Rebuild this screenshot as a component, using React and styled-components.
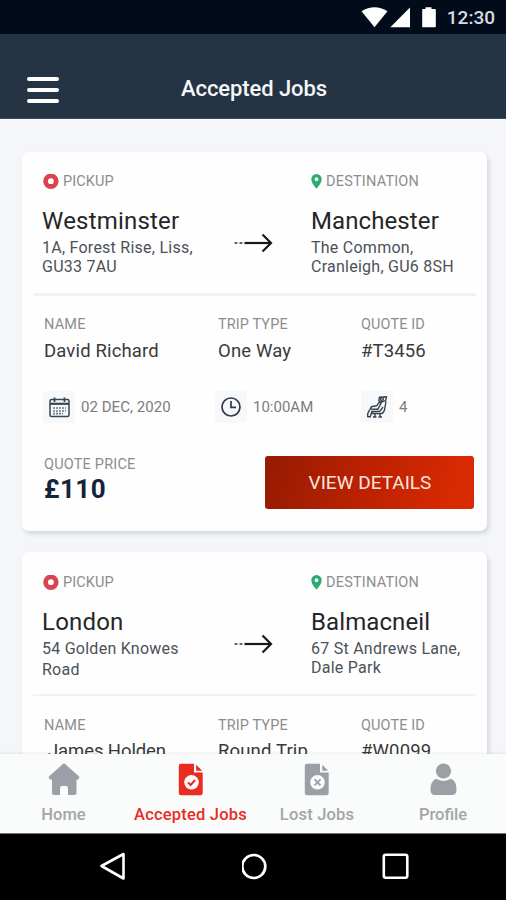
import React from "react";
import styled, { createGlobalStyle } from "styled-components";

const GlobalStyle = createGlobalStyle`
  * { box-sizing: border-box; }
  body { margin: 0; font-family: Roboto, "Liberation Sans", sans-serif; }
  svg { display: block; flex: none; }
`;

const Screen = styled.div`
  display: flex;
  flex-direction: column;
  width: 506px;
  height: 900px;
  overflow: hidden;
  background: #f4f6f9;
`;

const StatusBar = styled.div`
  flex: none;
  display: flex;
  justify-content: flex-end;
  height: 34px;
  padding-right: 11px;
  background: #020b1a;
`;

const Clock = styled.span`
  margin-left: 10px;
  font-size: 19px;
  font-weight: 500;
  line-height: 36px;
  color: #d9dde2;
`;

const Header = styled.header`
  flex: none;
  display: grid;
  grid-template-columns: 60px 1fr 60px;
  height: 85px;
  padding: 0 0 0 27px;
  background: #253445;
  border-bottom: 1px solid #415061;
`;

const MenuButton = styled.button`
  display: flex;
  flex-direction: column;
  gap: 7px;
  width: 32px;
  padding: 43px 0 0;
  border: 0;
  background: none;
`;

const MenuLine = styled.span`
  height: 4px;
  border-radius: 2px;
  background: #fff;
`;

const Title = styled.h1`
  margin: 37px 0 0 -25px;
  text-align: center;
  font-size: 22px;
  font-weight: 500;
  line-height: 36px;
  letter-spacing: -0.1px;
  color: #f4f6f8;
`;

const Content = styled.main`
  flex: 1;
  min-height: 0;
  display: flex;
  flex-direction: column;
  gap: 21px;
  padding: 33px 19px 0 22px;
  overflow: hidden;
`;

const Card = styled.article`
  flex: none;
  height: 379px;
  border-radius: 7px;
  background: #fefefe;
  box-shadow: 2px 3px 4px rgba(60, 70, 85, 0.17);
`;

const Route = styled.section`
  display: grid;
  grid-template-columns: 190px 79px 1fr;
  height: ${(p) => 141 + p.$shift}px;
  padding: ${(p) => 20 + p.$shift}px 0 0 20px;
`;

const Place = styled.div`
  display: flex;
  flex-direction: column;
  align-items: flex-start;
  white-space: nowrap;
`;

const Tag = styled.div`
  display: flex;
  align-items: center;
  gap: 4px;
  height: 20px;
  padding-left: ${(p) => p.$inset || 0}px;
`;

const Label = styled.span`
  display: block;
  font-size: 14.5px;
  line-height: 20px;
  letter-spacing: ${(p) => p.$spacing || 0}px;
  white-space: nowrap;
  color: #8d8d8d;
`;

const City = styled.h2`
  margin: 14px 0 0;
  font-size: 24px;
  font-weight: 400;
  line-height: 30px;
  letter-spacing: ${(p) => p.$spacing}px;
  color: #262626;
`;

const Address = styled.p`
  margin: ${(p) => (p.$leading > 19 ? 1 : 2)}px 0 0;
  font-size: 16px;
  line-height: ${(p) => p.$leading}px;
  letter-spacing: 0.25px;
  color: #4c5158;
`;

const ArrowCell = styled.div`
  padding: 61px 0 0 2px;
`;

const Divider = styled.hr`
  height: 3px;
  margin: 0 11px;
  border: 0;
  border-bottom: ${(p) => 3 - p.$thickness}px solid #fefefe;
  background: #f1f2f3;
`;

const Details = styled.section`
  display: grid;
  grid-template-columns: 174px 143px 1fr;
  padding: 19px 0 0 22px;
`;

const Value = styled.span`
  display: block;
  margin-top: ${(p) => 4 - (p.$raise || 0)}px;
  padding-left: ${(p) => p.$indent || 0}px;
  font-size: 18.5px;
  line-height: 24px;
  letter-spacing: ${(p) => (p.$indent ? -0.1 : 0.15)}px;
  white-space: nowrap;
  color: #3a3a3a;
`;

const Facts = styled.section`
  display: grid;
  grid-template-columns: 172px 146px 1fr;
  padding: 28px 0 0 21px;
`;

const Fact = styled.div`
  display: flex;
  align-items: center;
  gap: 6px;
  font-size: 15px;
  letter-spacing: ${(p) => p.$spacing || 0}px;
  white-space: nowrap;
  color: #7c7c7c;
`;

const IconTile = styled.span`
  display: grid;
  place-items: center;
  width: 32px;
  height: 32px;
  border-radius: 2px;
  background: #f6f8fa;
`;

const Footer = styled.section`
  display: flex;
  justify-content: space-between;
  padding: 32px 13px 0 22px;
`;

const Price = styled.strong`
  display: block;
  margin-top: -1px;
  font-size: 26px;
  font-weight: 700;
  line-height: 30px;
  letter-spacing: 0.5px;
  color: #14243a;
`;

const DetailsButton = styled.button`
  width: 209px;
  height: 53px;
  margin-top: 1px;
  padding: 0 0 0 1px;
  border: 0;
  border-radius: 3px;
  background: linear-gradient(105deg, #961b02 2%, #b92102 45%, #da2a02 92%);
  font: 400 19px/54px Roboto, "Liberation Sans", sans-serif;
  color: #fbe4df;
`;

const TabBar = styled.nav`
  flex: none;
  position: relative;
  display: grid;
  grid-template-columns: 127px 127px 126px 126px;
  height: 79px;
  background: #fafbfb;
  box-shadow: 0 -1px 3px rgba(0, 0, 0, 0.08);
`;

const Tab = styled.a`
  display: flex;
  flex-direction: column;
  align-items: center;
  padding-top: 9px;
  font-size: 16.5px;
  font-weight: 500;
  line-height: 24px;
  letter-spacing: ${(p) => p.$spacing || 0}px;
  white-space: nowrap;
  color: ${(p) => (p.$active ? "#ea2b1f" : "#a2a5a9")};
  svg { margin-bottom: 7px; color: ${(p) => (p.$active ? "#ea2b1f" : "#9aa0a6")}; }
`;

const SystemBar = styled.div`
  flex: none;
  display: flex;
  gap: 114px;
  height: 67px;
  padding: 18px 0 0 98px;
  background: #000;
  border-top: 1px solid #77797b;
`;

const StatusIcons = () => (
  <svg width="76" height="34" viewBox="361 0 76 34" fill="#fff">
    <path d="M361.5 11.2Q374.5 3.5 387.5 11.2L374.5 27.3Z" />
    <path d="M410 7.5V27.3H390.3Z" />
    <path d="M423 9h2.5V7.3h6V9h3.5q.8 0 .8.8V26.500q0 .8-.8.8H423q-.8 0-.8-.8V9.800q0-.8.8-.8Z" />
  </svg>
);

const PickupIcon = () => (
  <svg width="16" height="16" viewBox="0 0 16 16">
    <circle cx="7.900" cy="7.200" r="5.3" fill="#fff" stroke="#d64550" strokeWidth="4.800" />
  </svg>
);

const PinIcon = () => (
  <svg width="11" height="16" viewBox="0 0 11 16">
    <path transform="translate(0 -.7)" fillRule="evenodd" fill="#2cac73" d="M5.500.7a5.200 5.200 0 0 0-5.200 5.200C.3 9.800 5.500 15.400 5.500 15.400s5.200-5.600 5.200-9.500A5.200 5.200 0 0 0 5.500.7Zm0 3.300a1.900 1.900 0 1 1 0 3.800 1.900 1.900 0 0 1 0-3.800Z" />
  </svg>
);

const ArrowIcon = () => (
  <svg width="39" height="20" viewBox="0 0 39 20" fill="none" stroke="#171717" strokeWidth="2.200">
    <path d="M0.500 10h3M5.500 10h3" stroke="#666" />
    <path d="M10.500 10h26" />
    <path d="M28.500 1.500 37 10l-8.500 8.500" />
  </svg>
);

const CalendarIcon = () => (
  <svg width="21" height="21" viewBox="0 0 21 21" fill="none" stroke="#3b4653">
    <rect x="1" y="2.500" width="19" height="17" rx="1.500" strokeWidth="1.500" />
    <path d="M1 6.800h19" strokeWidth="2.200" />
    <path d="M5.500.5v4.500M15.500.5v4.500" strokeWidth="1.800" />
    <path d="M4 11h13M4 14h13M4 16.700h10" stroke="#707a88" strokeWidth="1.700" strokeDasharray="2 1" />
  </svg>
);

const ClockIcon = () => (
  <svg width="20" height="20" viewBox="0 0 20 20" fill="none" stroke="#303a46" strokeWidth="1.700">
    <circle cx="10" cy="10" r="9" />
    <path d="M10 4v6.300h5" />
  </svg>
);

const PassengerIcon = () => (
  <svg width="21" height="22" viewBox="0 0 21 22" fill="none" stroke="#35404d" strokeWidth="1.400" strokeLinejoin="round">
    <path d="m12.500 1.200 7-.4-1 4-3 .8-3.700-.7Z" />
    <circle cx="15" cy="3" r="1.400" />
    <path d="m12.300 6.200-2.500 3.500-5.500 1-1 2.300 7.500.3 3.700-6.800Z" />
    <path d="m19 5.500-1.600 9-2.200 3H5.500l-1-2 8.500-.3 3-4.200M2.700 13.500l-2 4.300v3h2.600l1.200-4M8 17.500V21M13 17.500V21M6 21h3.500M11.500 21H15" />
  </svg>
);

const HomeIcon = () => (
  <svg width="32" height="33" viewBox="0 0 32 33" fill="currentColor">
    <path d="M14.500 1.200q1.500-1.200 3 0L31 13.500q1 1-.2 2l-1.300 1.300H28.500V30q0 2-2 2H20V25q0-2-2-2h-4q-2 0-2 2v7H6q-2 0-2-2V16.800H2.500L.8 15q-.6-.8.2-1.500Z" />
  </svg>
);

const JobIcon = ({ accepted }) => (
  <svg width="26" height="33" viewBox="0 0 26 33">
    <path fill="currentColor" d="M3 .8h13v8.700h8.700V30q0 2.200-2.200 2.200H3Q.8 32.200.8 30V3Q.8.8 3 .8Z" />
    <path fill="currentColor" d="m18.200 1.800 6 6h-6Z" />
    <circle cx="13.500" cy="19.300" r="7.300" fill="#fafbfb" />
    <path d={accepted ? "m10 19.500 2.600 2.500 4.500-5" : "m10.500 16.300 6 6m0-6-6 6"} fill="none" stroke="currentColor" strokeWidth={accepted ? 2 : 1.700} />
  </svg>
);

const ProfileIcon = () => (
  <svg width="28" height="33" viewBox="0 0 28 33" fill="currentColor">
    <circle cx="14.500" cy="8" r="7.600" />
    <path d="M7 15.800q7.500 4.200 15 0Q27.500 18 27.500 27q0 5-4.500 5H6Q1.500 32 1.500 27q0-9 5.500-11.200Z" />
  </svg>
);

const SystemIcons = () => (
  <>
    <svg width="30" height="30" viewBox="0 0 30 30" fill="none" stroke="#fff" strokeWidth="2.600" strokeLinejoin="round">
      <path d="M25.500 2v24.500L3.500 14Z" />
    </svg>
    <svg width="26" height="28" viewBox="0 0 26 28" fill="none" stroke="#fff" strokeWidth="2.700">
      <circle cx="13" cy="14.500" r="11.500" transform="translate(-1.200 0)" />
    </svg>
    <svg width="28" height="28" viewBox="0 0 28 28" fill="none" stroke="#fff" strokeWidth="2.600">
      <rect x="1.800" y="2.700" width="23.500" height="23" rx="2" />
    </svg>
  </>
);

const jobs = [
  {
    from: "Westminster", fromAddress: ["1A, Forest Rise, Liss,", "GU33 7AU"], leading: 19,
    to: "Manchester", toAddress: ["The Common,", "Cranleigh, GU6 8SH"],
    name: "David Richard", trip: "One Way", quote: "#T3456",
    date: "02 DEC, 2020", time: "10:00AM", seats: "4", price: "£110",
    indent: 0, shift: 0, divider: 3,
  },
  {
    from: "London", fromAddress: ["54 Golden Knowes", "Road"], leading: 21,
    to: "Balmacneil", toAddress: ["67 St Andrews Lane,", "Dale Park"],
    name: "James Holden", trip: "Round Trip", quote: "#W0099",
    date: "04 DEC, 2020", time: "11:00AM", seats: "2", price: "£90",
    indent: 4, shift: 1, divider: 2,
  },
];

const JobCard = ({ job }) => (
  <Card>
    <Route $shift={job.shift}>
      <Place>
        <Tag $inset={1}><PickupIcon /><Label $spacing={0.1}>PICKUP</Label></Tag>
        <City $spacing={0.2}>{job.from}</City>
        <Address $leading={job.leading}>{job.fromAddress[0]}<br />{job.fromAddress[1]}</Address>
      </Place>
      <ArrowCell><ArrowIcon /></ArrowCell>
      <Place>
        <Tag><PinIcon /><Label $spacing={0.2}>DESTINATION</Label></Tag>
        <City $spacing={0.1}>{job.to}</City>
        <Address $leading={19}>{job.toAddress[0]}<br />{job.toAddress[1]}</Address>
      </Place>
    </Route>
    <Divider $thickness={job.divider} />
    <Details>
      <div><Label $spacing={0.2}>NAME</Label><Value $raise={job.shift} $indent={job.indent}>{job.name}</Value></div>
      <div><Label $spacing={0.1}>TRIP TYPE</Label><Value $raise={job.shift}>{job.trip}</Value></div>
      <div><Label $spacing={0.1}>QUOTE ID</Label><Value $raise={job.shift}>{job.quote}</Value></div>
    </Details>
    <Facts>
      <Fact $spacing={0.05}><IconTile><CalendarIcon /></IconTile>{job.date}</Fact>
      <Fact><IconTile><ClockIcon /></IconTile>{job.time}</Fact>
      <Fact><IconTile><PassengerIcon /></IconTile>{job.seats}</Fact>
    </Facts>
    <Footer>
      <div><Label $spacing={0.2}>QUOTE PRICE</Label><Price>{job.price}</Price></div>
      <DetailsButton>VIEW DETAILS</DetailsButton>
    </Footer>
  </Card>
);

export default function App() {
  return (
    <Screen>
      <GlobalStyle />
      <StatusBar><StatusIcons /><Clock>12:30</Clock></StatusBar>
      <Header>
        <MenuButton aria-label="Menu"><MenuLine /><MenuLine /><MenuLine /></MenuButton>
        <Title>Accepted Jobs</Title>
      </Header>
      <Content>
        {jobs.map((job) => <JobCard key={job.quote} job={job} />)}
      </Content>
      <TabBar>
        <Tab><HomeIcon />Home</Tab>
        <Tab $active $spacing={0.2}><JobIcon accepted />Accepted Jobs</Tab>
        <Tab $spacing={0.2}><JobIcon />Lost Jobs</Tab>
        <Tab><ProfileIcon />Profile</Tab>
      </TabBar>
      <SystemBar><SystemIcons /></SystemBar>
    </Screen>
  );
}
